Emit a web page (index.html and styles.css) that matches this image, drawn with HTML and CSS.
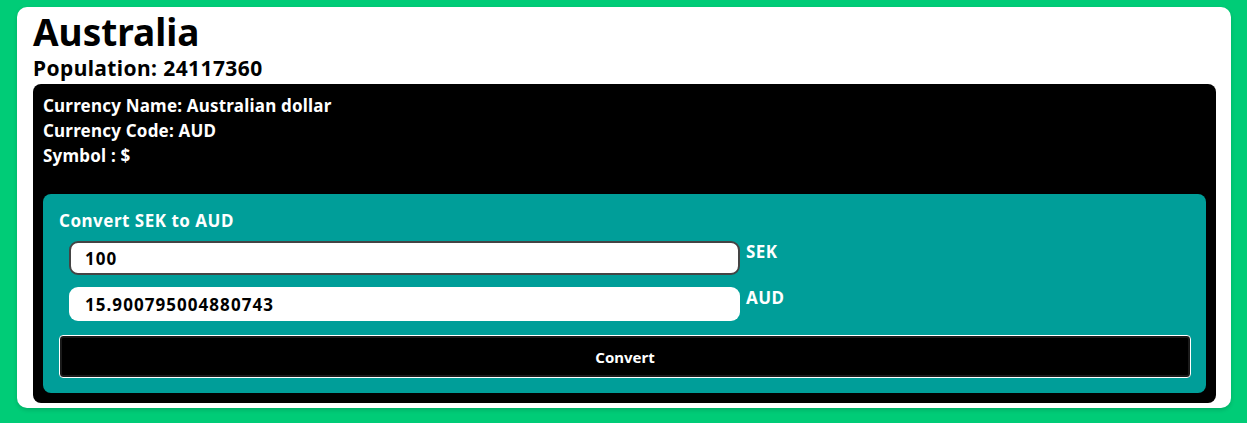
FILE: index.html
```html
<!DOCTYPE html>
<html>
<head>
<meta charset="utf-8">
<link rel="stylesheet" href="styles.css">
</head>
<body>
<div class="card">
  <h1 class="title">Australia</h1>
  <h3 class="population">Population: 24117360</h3>
  <div class="currency">
    <p class="info">Currency Name: Australian dollar</p>
    <p class="info">Currency Code: AUD</p>
    <p class="info">Symbol : $</p>
    <div class="converter">
      <div class="conv-title">Convert SEK to AUD</div>
      <div class="row">
        <input class="field focused" type="text" value="100">
        <span class="unit">SEK</span>
      </div>
      <div class="row">
        <input class="field" type="text" value="15.900795004880743">
        <span class="unit">AUD</span>
      </div>
      <button class="convert-btn">Convert</button>
    </div>
  </div>
</div>
</body>
</html>
```

FILE: styles.css
```css
* { box-sizing: border-box; }
html, body { margin: 0; }
body {
  background: #00cc77;
  padding: 7px 16px 15px 17px;
  font-family: "Noto Sans", "Open Sans", sans-serif;
  height: 423px;
}
.card {
  background: #ffffff;
  border-radius: 10px;
  padding: 4px 15px 5px 16px;
  box-shadow: 0 2px 4px rgba(0,0,0,0.15);
}
.title {
  margin: 0;
  font-size: 37px;
  font-weight: 700;
  line-height: 42px;
  color: #000;
}
.population {
  margin: 0;
  font-size: 21px;
  letter-spacing: 0.4px;
  font-weight: 700;
  line-height: 31px;
  color: #000;
}
.currency {
  background: #000;
  border-radius: 8px;
  padding: 9px 10px 10px 10px;
  color: #fff;
}
.info {
  margin: 0;
  font-size: 17px;
  letter-spacing: 0.2px;
  font-weight: 700;
  line-height: 25px;
}
.converter {
  margin-top: 26px;
  background: #009e99;
  border-radius: 8px;
  padding: 16px 15px 15px 16px;
}
.conv-title {
  font-size: 17px;
  letter-spacing: 0.5px;
  font-weight: 700;
  line-height: 22px;
  margin-bottom: 9px;
}
.row {
  display: flex;
  align-items: flex-start;
  gap: 6px;
  margin-left: 10px;
  margin-bottom: 12px;
}
.field {
  width: 671px;
  height: 34px;
  border: none;
  border-radius: 9px;
  background: #fff;
  padding: 0 16px;
  font-family: inherit;
  font-size: 17px;
  letter-spacing: 1.05px;
  font-weight: 700;
  color: #000;
  outline: none;
}
.field.focused {
  border: 2px solid #444;
  padding: 0 14px;
}
.unit {
  font-size: 17px;
  letter-spacing: 0.4px;
  font-weight: 700;
  line-height: 22px;
  color: #fff;
}
.convert-btn {
  display: block;
  width: 100%;
  height: 43px;
  margin-top: 14px;
  background: #000;
  color: #fff;
  border: 1px solid #fff;
  border-radius: 4px;
  font-family: inherit;
  font-size: 15px;
  font-weight: 700;
  box-shadow: inset 0 0 0 2px #1a1a1a;
}
```
